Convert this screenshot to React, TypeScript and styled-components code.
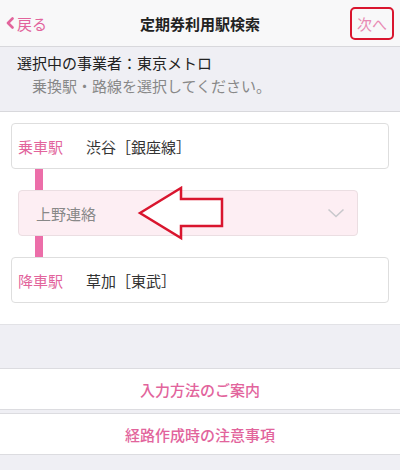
import React from "react";
import styled, { createGlobalStyle } from "styled-components";

const Global = createGlobalStyle`
  html, body { margin: 0; padding: 0; background: #efeff4; }
  body { font-family: "Noto Sans CJK JP", "Noto Sans", sans-serif; width: 400px; height: 470px; overflow: hidden; }
`;

const PINK = "#e2649c";

const Page = styled.div`
  width: 400px;
  height: 470px;
  display: flex;
  flex-direction: column;
  background: #efeff4;
`;

const NavBar = styled.header`
  height: 47px;
  box-sizing: border-box;
  background: #f8f8f9;
  border-bottom: 1px solid #d8d8dc;
  display: grid;
  grid-template-columns: 100px 1fr 100px;
  align-items: center;
`;

const BackBtn = styled.div`
  display: flex;
  align-items: center;
  gap: 3px;
  padding-left: 6px;
  color: ${PINK};
  font-size: 15px;
`;

const Title = styled.div`
  text-align: center;
  font-weight: 700;
  font-size: 15px;
  color: #222;
`;

const NextWrap = styled.div`
  display: flex;
  justify-content: flex-end;
  padding-right: 6px;
`;

const NextBtn = styled.div`
  color: #e88ab3;
  font-size: 15px;
  padding: 5px 5px;
  border: 2.5px solid #d9152e;
  border-radius: 5px;
  line-height: 19px;
`;

const Info = styled.section`
  height: 65px;
  box-sizing: border-box;
  border-bottom: 1px solid #d8d8dc;
  padding: 4px 0 0 17px;
  font-size: 15px;
  line-height: 23px;
`;

const InfoMain = styled.div`
  color: #222;
`;

const InfoSub = styled.div`
  color: #888;
  padding-left: 15px;
`;

const RouteSection = styled.section`
  background: #fff;
  padding: 11px 11px 0;
  height: 213px;
  box-sizing: border-box;
  border-bottom: 1px solid #e2e2e6;
`;

const StationCard = styled.div`
  height: 46px;
  box-sizing: border-box;
  border: 1px solid #dedede;
  border-radius: 4px;
  display: flex;
  align-items: center;
  padding-left: 6px;
  font-size: 15px;
`;

const StationLabel = styled.span`
  color: ${PINK};
  width: 68px;
`;

const StationName = styled.span`
  color: #333;
`;

const Connector = styled.div<{ $h: number }>`
  width: 8px;
  height: ${(p) => p.$h}px;
  margin-left: 24px;
  background: #ec6ea9;
`;

const Middle = styled.div`
  position: relative;
  height: 46px;
`;

const MiddleBar = styled.div`
  position: absolute;
  left: 24px;
  top: 0;
  bottom: 0;
  width: 8px;
  background: #ec6ea9;
`;

const Select = styled.div`
  position: relative;
  margin-left: 7px;
  width: 340px;
  height: 46px;
  box-sizing: border-box;
  background: #fdeef3;
  border: 1px solid #ebdee2;
  border-radius: 4px;
  display: flex;
  align-items: center;
  justify-content: space-between;
  padding: 0 12px 0 17px;
  font-size: 15px;
  color: #888;
`;

const Arrow = styled.svg`
  position: absolute;
  left: 118px;
  top: -5px;
`;

const LinkGroup = styled.div`
  margin-top: 43px;
  display: flex;
  flex-direction: column;
  gap: 3px;
`;

const LinkRow = styled.div`
  height: 42px;
  background: #fff;
  border-top: 1px solid #dcdce0;
  border-bottom: 1px solid #dcdce0;
  box-sizing: border-box;
  display: flex;
  align-items: center;
  justify-content: center;
  color: ${PINK};
  font-size: 15px;
  font-weight: 500;
`;

export default function App() {
  return (
    <>
      <Global />
      <Page>
        <NavBar>
          <BackBtn>
            <svg width="8" height="12" viewBox="0 0 8 12">
              <path d="M6.5 1.5 L2 6 L6.5 10.5" stroke={PINK} strokeWidth="2.6" fill="none" strokeLinecap="round" strokeLinejoin="round" />
            </svg>
            戻る
          </BackBtn>
          <Title>定期券利用駅検索</Title>
          <NextWrap>
            <NextBtn>次へ</NextBtn>
          </NextWrap>
        </NavBar>
        <Info>
          <InfoMain>選択中の事業者：東京メトロ</InfoMain>
          <InfoSub>乗換駅・路線を選択してください。</InfoSub>
        </Info>
        <RouteSection>
          <StationCard>
            <StationLabel>乗車駅</StationLabel>
            <StationName>渋谷［銀座線］</StationName>
          </StationCard>
          <Connector $h={21} />
          <Middle>
            <MiddleBar />
            <Select>
              <span>上野連絡</span>
              <svg width="18" height="10" viewBox="0 0 18 10">
                <path d="M1.5 1.5 L9 8.5 L16.5 1.5" stroke="#c8c8cc" strokeWidth="1.6" fill="none" />
              </svg>
              <Arrow width="90" height="58" viewBox="0 0 90 58">
                <polygon points="3,27 44,2 44,13 85,13 85,40 44,40 44,52" fill="#fff" stroke="#d9152e" strokeWidth="2.5" strokeLinejoin="miter" />
              </Arrow>
            </Select>
          </Middle>
          <Connector $h={21} />
          <StationCard>
            <StationLabel>降車駅</StationLabel>
            <StationName>草加［東武］</StationName>
          </StationCard>
        </RouteSection>
        <LinkGroup>
          <LinkRow>入力方法のご案内</LinkRow>
          <LinkRow>経路作成時の注意事項</LinkRow>
        </LinkGroup>
      </Page>
    </>
  );
}
